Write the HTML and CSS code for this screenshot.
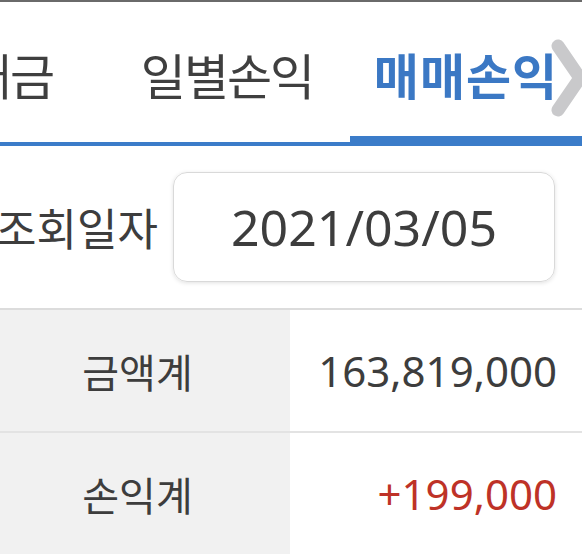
FILE: index.html
```html
<!DOCTYPE html>
<html lang="ko">
<head>
<meta charset="utf-8">
<title>매매손익</title>
<link rel="stylesheet" href="styles.css">
</head>
<body>
<div class="screen">
  <div class="tabbar">
    <div class="tabs">
      <div class="tab first">결제대금</div>
      <div class="tab">일별손익</div>
      <div class="tab active">매매손익</div>
    </div>
    <svg class="more" width="44" height="84" viewBox="0 0 44 84" aria-hidden="true">
      <polyline points="14,8 36,40 14,72" fill="none" stroke="#c9c9cb" stroke-width="13" stroke-linecap="round" stroke-linejoin="round"/>
    </svg>
  </div>
  <div class="search">
    <span class="search-label">조회일자</span>
    <div class="date-box">2021/03/05</div>
  </div>
  <div class="summary">
    <div class="row">
      <div class="cell-label">금액계</div>
      <div class="cell-value">163,819,000</div>
    </div>
    <div class="row">
      <div class="cell-label">손익계</div>
      <div class="cell-value profit">+199,000</div>
    </div>
  </div>
</div>
</body>
</html>
```
FILE: styles.css
```css
html, body {
  margin: 0;
  padding: 0;
  background: #ffffff;
}
body {
  font-family: "Noto Sans", "Noto Sans CJK KR", sans-serif;
  color: #3d3d3d;
  width: 582px;
  height: 554px;
  overflow: hidden;
}
.screen {
  border-top: 2px solid #6a6a6a;
}
.tabbar {
  position: relative;
  overflow: hidden;
  border-bottom: 4px solid #3b7cc9;
}
.tabs {
  position: relative;
  z-index: 1;
  display: flex;
  margin-left: -114px;
  height: 140px;
}
.tab {
  flex: none;
  width: 232px;
  box-sizing: border-box;
  padding: 2px 14px 0 0;
  display: flex;
  align-items: center;
  justify-content: center;
  white-space: nowrap;
  font-family: "Noto Sans CJK KR", sans-serif;
  font-size: 49px;
  letter-spacing: -2px;
  color: #3f3f3f;
}
.tab.first {
  justify-content: flex-end;
  padding-right: 65px;
}
.tab.active {
  color: #3b78c4;
  font-weight: 700;
  letter-spacing: 1px;
  border-bottom: 6px solid #3b7cc9;
  padding-top: 8px;
  padding-right: 0;
}
.more {
  position: absolute;
  right: -6px;
  top: 36px;
}
.search {
  display: flex;
  align-items: center;
  height: 162px;
  border-bottom: 2px solid #dcdcdc;
}
.search-label {
  font-family: "Noto Sans CJK KR", sans-serif;
  font-size: 44px;
  color: #3d3d3d;
  margin-left: -18px;
  width: 176px;
  text-align: right;
  flex: none;
  margin-right: 15px;
}
.date-box {
  width: 382px;
  height: 110px;
  box-sizing: border-box;
  border: 1.5px solid #d9d9d9;
  border-radius: 14px;
  box-shadow: 0 1px 4px rgba(0, 0, 0, 0.12);
  display: flex;
  align-items: center;
  justify-content: center;
  font-size: 50px;
  color: #3d3d3d;
}
.row {
  display: flex;
  height: 121px;
  border-bottom: 2px solid #e3e3e3;
}
.cell-label {
  width: 290px;
  flex: none;
  box-sizing: border-box;
  padding-right: 15px;
  background: #f1f1f1;
  display: flex;
  align-items: center;
  justify-content: center;
  font-family: "Noto Sans CJK KR", sans-serif;
  font-size: 40px;
  color: #3d3d3d;
}
.cell-value {
  flex: 1;
  display: flex;
  align-items: center;
  justify-content: flex-end;
  padding-right: 25px;
  font-size: 42px;
  color: #3d3d3d;
}
.cell-value.profit {
  color: #be3227;
}
```
